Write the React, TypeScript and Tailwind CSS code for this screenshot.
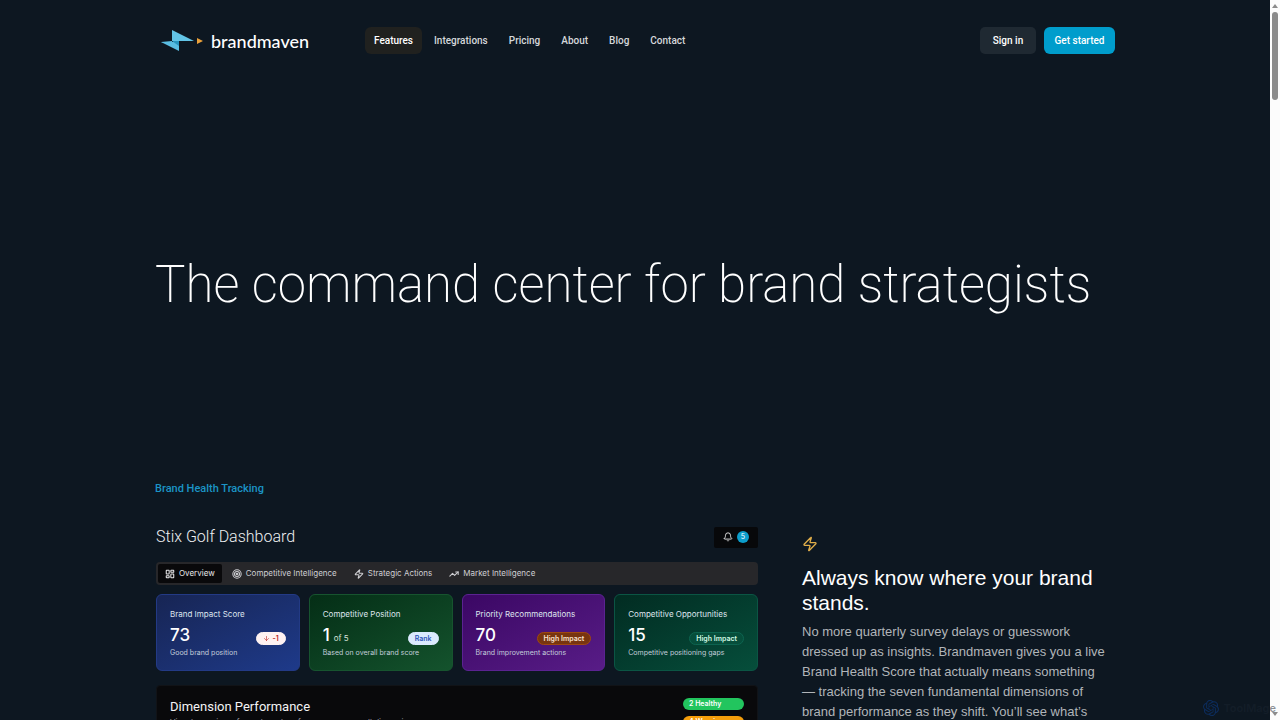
import { Bell, ArrowDown, LayoutDashboard, Target, TrendingUp, Zap, type LucideIcon } from 'lucide-react'
import { SiOpenai } from 'react-icons/si'
import clsx from 'clsx'

const navItems = ['Features', 'Integrations', 'Pricing', 'About', 'Blog', 'Contact']

const tabs: { label: string; icon: LucideIcon }[] = [
  { label: 'Overview', icon: LayoutDashboard },
  { label: 'Competitive Intelligence', icon: Target },
  { label: 'Strategic Actions', icon: Zap },
  { label: 'Market Intelligence', icon: TrendingUp },
]

const stats = [
  {
    title: 'Brand Impact Score',
    value: '73',
    note: 'Good brand position',
    badge: '-1',
    down: true,
    card: 'border-[#233a85] from-[#172554] to-[#1e3a8a]',
    pill: 'border-[#fef2f2] bg-[#fef2f2] text-[#b91c1c]',
  },
  {
    title: 'Competitive Position',
    value: '1',
    suffix: 'of 5',
    note: 'Based on overall brand score',
    badge: 'Rank',
    card: 'border-[#17542f] from-[#052e16] to-[#14532d]',
    pill: 'border-[#dbeafe] bg-[#dbeafe] text-[#2f55b8]',
  },
  {
    title: 'Priority Recommendations',
    value: '70',
    note: 'Brand improvement actions',
    badge: 'High Impact',
    card: 'border-[#5b2391] from-[#3b0764] to-[#581c87]',
    pill: 'border-[#a0480f] bg-[#78350f] text-[#fbe3cf]',
  },
  {
    title: 'Competitive Opportunities',
    value: '15',
    note: 'Competitive positioning gaps',
    badge: 'High Impact',
    card: 'border-[#0b5544] from-[#022c22] to-[#064e3b]',
    pill: 'border-[#0d6450] bg-[#064e3b] text-[#d1fae5]',
  },
]

function Logo() {
  return (
    <a href="#" aria-label="brandmaven" className="flex w-[210px] items-center gap-2 pl-1.5">
      <svg viewBox="0 0 42 22" className="h-[22px] w-[42px]" aria-hidden="true">
        <path d="M11 0 33 11H11Z" fill="#62c4e6" />
        <path d="M0 12H18V21Z" fill="#5abde2" />
        <path d="M11 11H18V16Z" fill="#2795bf" />
        <path d="M11 11V15L0 12Z" fill="#5abde2" />
        <path d="M36 8 42 11 36 14Z" fill="#eba13a" />
      </svg>
      <span className="font-['Lato','Open_Sans',sans-serif] text-[18px] leading-6 font-medium text-white">
        brandmaven
      </span>
    </a>
  )
}

function Header() {
  return (
    <header className="flex items-center justify-between pt-[27px]">
      <div className="flex items-center">
        <Logo />
        <nav className="flex items-center gap-[3px]">
          {navItems.map((item, i) => (
            <a
              key={item}
              href="#"
              className={clsx(
                'rounded-md px-[9px] py-1 text-[10px] leading-[19px] font-medium',
                i === 0 ? 'bg-[#20211f] text-white' : 'text-[#d5d8db]'
              )}
            >
              {item}
            </a>
          ))}
        </nav>
      </div>
      <div className="flex gap-2 text-[10px] leading-[27px] font-medium">
        <button className="w-14 rounded-[5px] bg-[#1f2932] text-white">Sign in</button>
        <button className="w-[71px] rounded-md bg-[#009dcc] text-white">Get started</button>
      </div>
    </header>
  )
}

function StatCard({ stat }: { stat: (typeof stats)[number] }) {
  return (
    <article className={clsx('rounded-md border bg-linear-to-br px-[13px] pt-[13px] pb-[11px]', stat.card)}>
      <h4 className="text-[8px] leading-3 whitespace-nowrap text-[#dfe5ee]">{stat.title}</h4>
      <div className="mt-[3px] flex h-6 items-center justify-between">
        <p className="flex items-baseline gap-1 text-[17px] leading-6 font-medium text-white">
          {stat.value}
          {stat.suffix && <span className="text-[8px] leading-3 font-normal text-[#d5e2d9]">{stat.suffix}</span>}
        </p>
        <span
          className={clsx(
            'mt-1.5 flex items-center gap-[3px] rounded-full border px-1.5 text-[7px] leading-[11px] font-semibold',
            stat.pill
          )}
        >
          {stat.down && <ArrowDown size={7} strokeWidth={2} />}
          {stat.badge}
        </span>
      </div>
      <p className="text-[7px] leading-3 whitespace-nowrap text-[#c3cddb]">{stat.note}</p>
    </article>
  )
}

function Dashboard() {
  return (
    <section className="px-px font-['Inter',sans-serif]">
      <div className="flex items-center justify-between">
        <h2 className="font-['Roboto',sans-serif] text-[16px] leading-6 font-light text-[#edf0f2]">
          Stix Golf Dashboard
        </h2>
        <button aria-label="Notifications" className="flex h-[21px] items-center gap-1 rounded-xs bg-[#07080a] px-[9px]">
          <Bell size={10} className="text-white" />
          <span className="size-3 rounded-full bg-[#0c9dcb] text-[7px] leading-3 text-white">5</span>
        </button>
      </div>

      <div className="mt-[13px] flex gap-[3px] rounded-sm bg-[#27272a] p-[2px]">
        {tabs.map(({ label, icon: Icon }, i) => (
          <button
            key={label}
            className={clsx(
              'flex items-center gap-1 rounded-xs px-[7px] text-[8px] leading-[19px]',
              i === 0 ? 'bg-[#09090b] text-[#e8e8ea]' : 'text-[#cfcfd3]'
            )}
          >
            <Icon size={10} strokeWidth={2.5} />
            {label}
          </button>
        ))}
      </div>

      <div className="mt-[9px] grid grid-cols-4 gap-[9px]">
        {stats.map(stat => (
          <StatCard key={stat.title} stat={stat} />
        ))}
      </div>

      <article className="mt-3.5 flex justify-between rounded-sm border border-[#111317] bg-[#09090b] px-[13px] pt-3">
        <div>
          <h3 className="font-['Roboto',sans-serif] text-[13px] leading-[18px] text-[#f4f4f5]">
            Dimension Performance
          </h3>
          <p className="text-[8px] leading-3 text-[#a1a1aa]">
            Visual overview of your brand performance across all dimensions
          </p>
        </div>
        <div className="flex w-[61px] flex-col gap-1.5 text-[7px] leading-3 font-semibold text-white">
          <span className="rounded-full bg-[#22c55e] px-1.5">2 Healthy</span>
          <span className="rounded-full bg-[#f59e0b] px-1.5">4 Warning</span>
        </div>
      </article>
    </section>
  )
}

// Browser style scroll track on the right edge
function ScrollTrack() {
  return (
    <div className="flex w-2.5 shrink-0 flex-col items-center justify-between bg-[#fcfcfc] py-1">
      <div className="flex flex-col items-center gap-1">
        <span className="border-x-3 border-b-4 border-x-transparent border-b-[#8b8b8b]" />
        <span className="h-22 w-1.5 rounded-full bg-[#8b8b8b]" />
      </div>
      <span className="border-x-3 border-t-4 border-x-transparent border-t-[#8b8b8b]" />
    </div>
  )
}

export default function App() {
  return (
    <div className="relative flex h-screen overflow-hidden bg-[#0d1721] font-['Roboto',sans-serif]">
      <div className="min-w-0 flex-1 overflow-hidden">
        <div className="mx-auto max-w-[960px]">
          <Header />

          <main>
            <h1 className="pt-[199px] text-[51px] leading-16 font-extralight whitespace-nowrap text-white">
              The command center for brand strategists
            </h1>

            <p className="mt-[164px] text-[11px] leading-4 font-medium text-[#1b94c6]">Brand Health Tracking</p>

            <div className="mt-7 grid grid-cols-[604px_1fr] gap-[43px]">
              <Dashboard />
              <section className="pt-[11px] pr-2 font-['Liberation_Sans',sans-serif]">
                <Zap size={16} strokeWidth={2} className="text-[#e0ae4a]" />
                <h2 className="mt-[13px] text-[21px] leading-[25px] text-white">
                  Always know where your brand stands.
                </h2>
                <p className="mt-[7px] text-[13px] leading-5 text-[#b1b5b9]">
                  No more quarterly survey delays or guesswork dressed up as insights. Brandmaven gives you a live
                  Brand Health Score that actually means something — tracking the seven fundamental dimensions of
                  brand performance as they shift. You’ll see what’s
                </p>
              </section>
            </div>
          </main>
        </div>
      </div>
      <ScrollTrack />

      <div className="absolute right-1 bottom-1 flex items-center gap-1 font-['Inter',sans-serif]">
        <SiOpenai size={16} className="text-[#0c2c5c]" />
        <span className="text-[11px] leading-4 font-semibold text-[#1a2430]/50">ToolMage</span>
      </div>
    </div>
  )
}
